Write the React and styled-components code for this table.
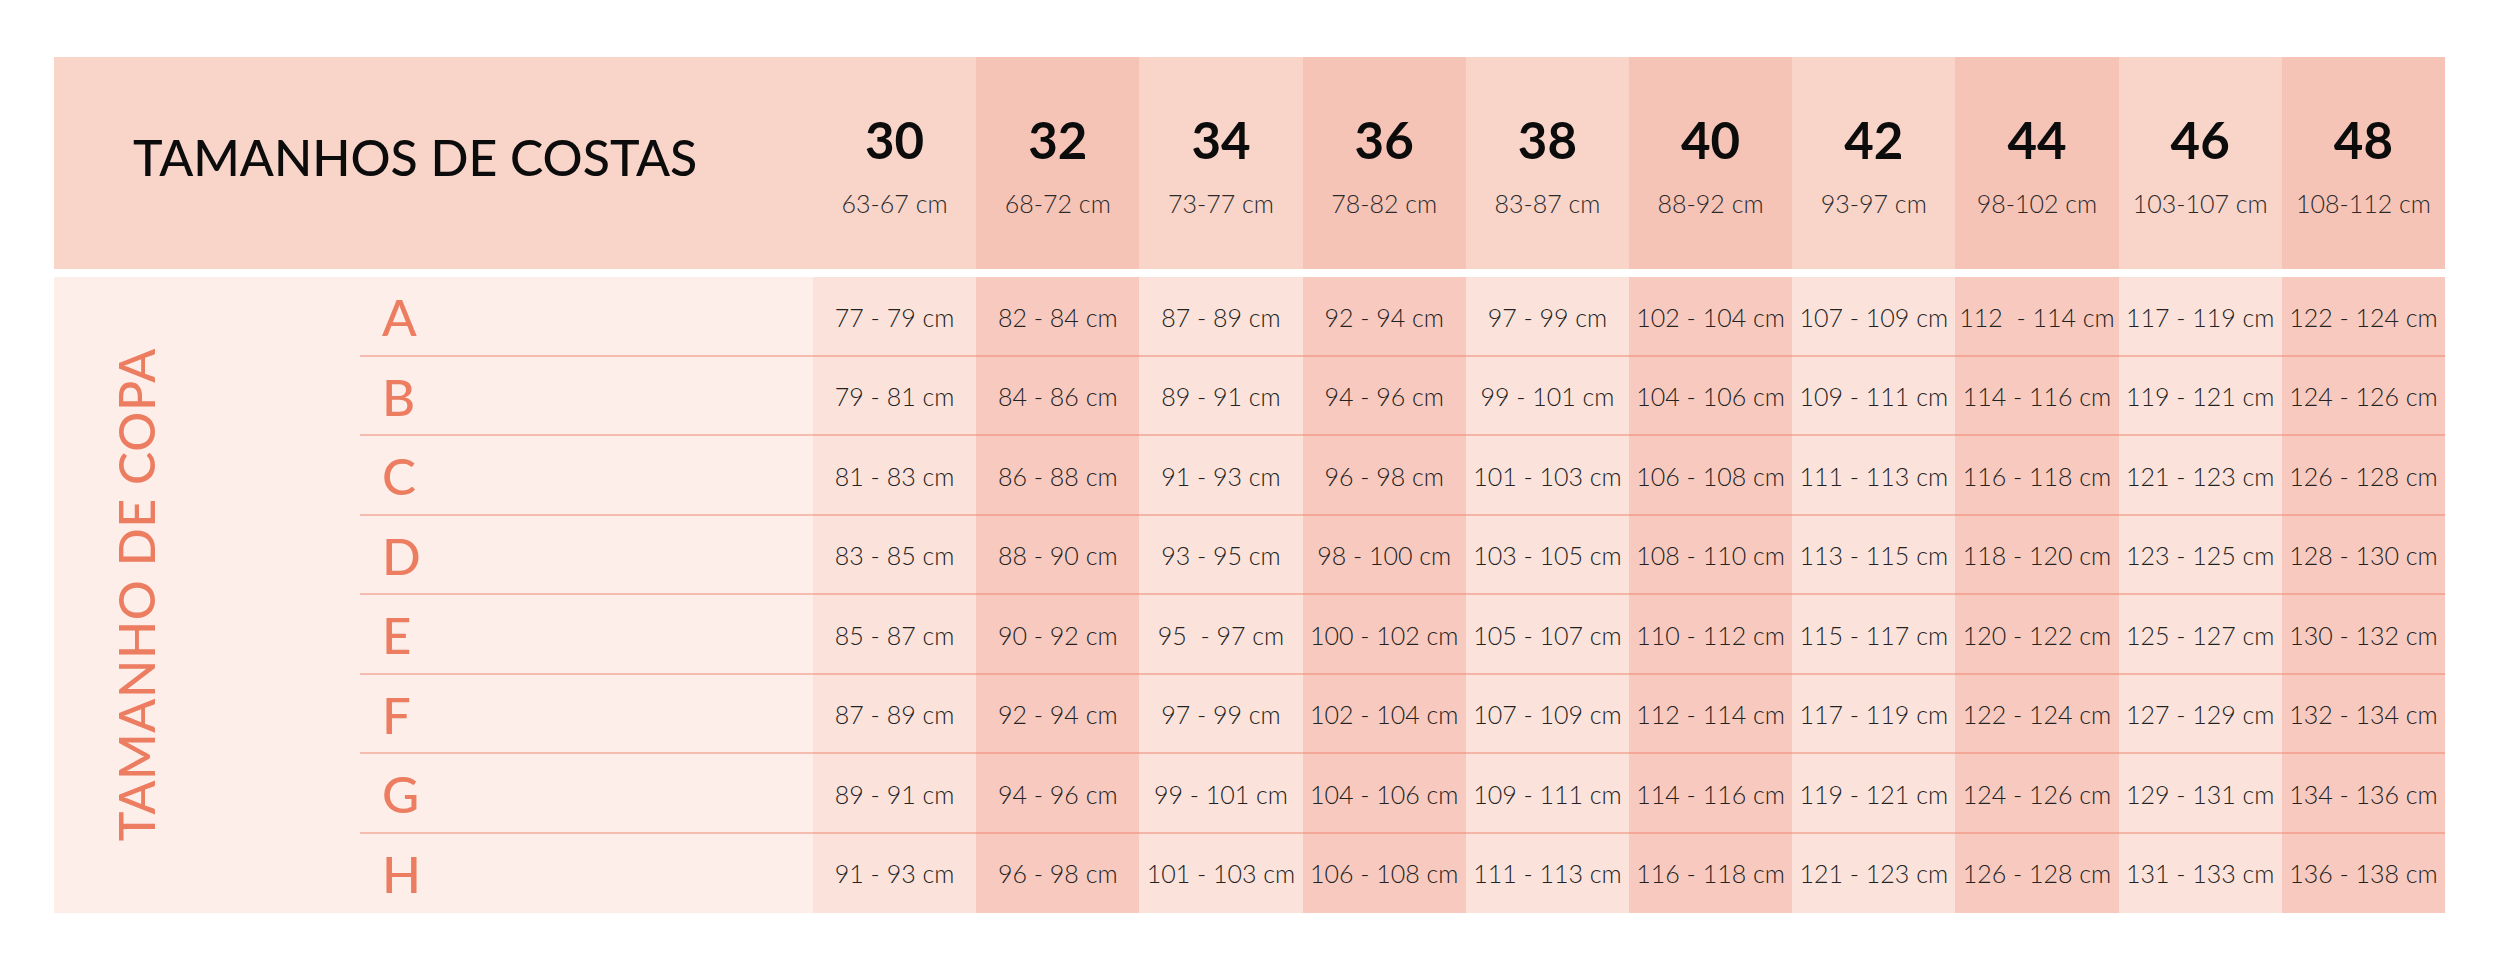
import React from "react";
import styled, { createGlobalStyle } from "styled-components";

const GlobalStyle = createGlobalStyle`
  body {
    margin: 0;
    background: #ffffff;
    font-family: "Lato", "Liberation Sans", sans-serif;
  }
`

const Page = styled.div`
  padding: 57px 55px 56px 54px;
`

const Chart = styled.div`
  width: 2391px;
`

const HeadRow = styled.div`
  display: grid;
  grid-template-columns: 759px repeat(10, 1fr);
  height: 212px;
  background: #f8d4c9;
`

const Title = styled.div`
  padding: 75px 0 0 79px;
  font-size: 50px;
  line-height: 1;
  font-weight: 500;
  color: #0c0c0c;
`

const HeadCell = styled.div`
  display: flex;
  flex-direction: column;
  align-items: center;
  padding-top: 57px;
  background: ${p => (p.$dark ? "#f6c3b7" : "#f8d4c9")};
`

const Size = styled.div`
  font-size: 51px;
  line-height: 1;
  font-weight: 700;
  color: #0c0c0c;
`

const Range = styled.div`
  margin-top: 26px;
  font-size: 25px;
  line-height: 1;
  font-weight: 300;
  color: #2a2a2a;
`

const Body = styled.div`
  display: grid;
  grid-template-columns: 306px 1fr;
  margin-top: 8px;
  background: #fdeeea;
`

const Side = styled.div`
  display: flex;
  align-items: center;
  padding-left: 57px;
`

const SideLabel = styled.div`
  writing-mode: vertical-rl;
  transform: rotate(180deg);
  font-size: 50px;
  line-height: 1;
  font-weight: 500;
  letter-spacing: 0.6px;
  color: #ec7d60;
`

const Rows = styled.div`
  display: flex;
  flex-direction: column;
`

const Row = styled.div`
  display: grid;
  grid-template-columns: 453px repeat(10, 1fr);
  height: 79.5px;
  box-sizing: border-box;
  position: relative;

  &:not(:last-child)::after {
    content: "";
    position: absolute;
    left: 0;
    right: 0;
    bottom: 0;
    height: 2px;
    background: rgba(236, 118, 92, 0.42);
  }
`

const Cup = styled.div`
  display: flex;
  align-items: center;
  padding-left: 22px;
  font-size: 51px;
  line-height: 1;
  font-weight: 500;
  color: #ec7d60;
`

const Cell = styled.div`
  display: flex;
  align-items: center;
  justify-content: center;
  white-space: pre;
  font-size: 25px;
  font-weight: 300;
  color: #222222;
  background: ${p => (p.$dark ? "#f8cabf" : "#fbe2db")};
`

const sizes = [
  ["30", "63-67 cm"],
  ["32", "68-72 cm"],
  ["34", "73-77 cm"],
  ["36", "78-82 cm"],
  ["38", "83-87 cm"],
  ["40", "88-92 cm"],
  ["42", "93-97 cm"],
  ["44", "98-102 cm"],
  ["46", "103-107 cm"],
  ["48", "108-112 cm"],
]

const cups = ["A", "B", "C", "D", "E", "F", "G", "H"]

// each cup row starts 2cm higher than the previous, each band step adds 5cm
const cellText = (row, col) => {
  if (row === 0 && col === 7) return "112  - 114 cm"
  if (row === 4 && col === 2) return "95  - 97 cm"
  const lo = 77 + row * 2 + col * 5
  return `${lo} - ${lo + 2} cm`
}

const App = () => {
  return (
    <Page>
      <GlobalStyle />
      <Chart>
        <HeadRow>
          <Title>TAMANHOS DE COSTAS</Title>
          {sizes.map(([n, r], i) => (
            <HeadCell key={n} $dark={i % 2 === 1}>
              <Size>{n}</Size>
              <Range>{r}</Range>
            </HeadCell>
          ))}
        </HeadRow>

        <Body>
          <Side>
            <SideLabel>TAMANHO DE COPA</SideLabel>
          </Side>
          <Rows>
            {cups.map((c, r) => (
              <Row key={c}>
                <Cup>{c}</Cup>
                {sizes.map(([n], i) => (
                  <Cell key={n} $dark={i % 2 === 1}>
                    {cellText(r, i)}
                  </Cell>
                ))}
              </Row>
            ))}
          </Rows>
        </Body>
      </Chart>
    </Page>
  );
}

export default App;
